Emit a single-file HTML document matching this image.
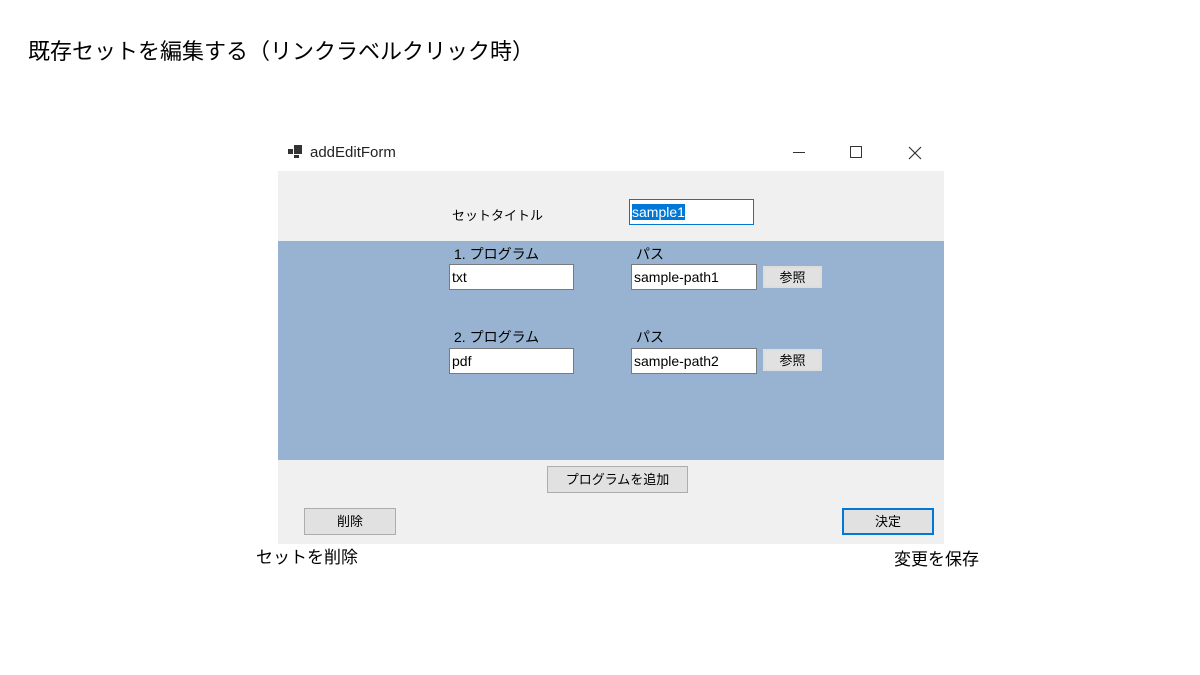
<!DOCTYPE html>
<html><head><meta charset="utf-8"><style>
body{margin:0;width:1200px;height:675px;background:#fff;position:relative;overflow:hidden;font-family:"Liberation Sans","Noto Sans CJK JP",sans-serif;}
.a{position:absolute;}
.t{font-size:13px;color:#000;white-space:nowrap;}
.in{position:absolute;background:#fff;border:1px solid #7a7a7a;box-sizing:border-box;height:26px;font-size:14px;line-height:24px;padding-left:2px;}
.btn{position:absolute;background:#e1e1e1;border:1px solid #adadad;box-sizing:border-box;font-size:13px;text-align:center;}
</style></head><body>
<div class="a" style="left:28px;top:34px;font-size:22px;white-space:nowrap">既存セットを編集する（リンクラベルクリック時）</div>
<svg class="a" style="left:288px;top:145px" width="16" height="14"><rect x="0" y="4" width="5" height="5" fill="#333"/><rect x="6" y="0" width="8" height="9" fill="#333"/><rect x="6" y="10" width="5" height="3" fill="#333"/></svg>
<div class="a" style="left:310px;top:144px;font-size:15px;color:#222">addEditForm</div>
<div class="a" style="left:793px;top:152px;width:12px;height:1px;background:#333"></div>
<div class="a" style="left:850px;top:146px;width:12px;height:12px;border:1px solid #333;box-sizing:border-box"></div>
<svg class="a" style="left:908px;top:146px" width="14" height="14"><path d="M1 1L13 13M13 1L1 13" stroke="#333" stroke-width="1.2"/></svg>
<div class="a" style="left:278px;top:171px;width:666px;height:373px;background:#f0f0f0"></div>
<div class="a" style="left:278px;top:241px;width:666px;height:219px;background:#98b3d1"></div>
<div class="a t" style="left:452px;top:205px">セットタイトル</div>
<div class="in" style="left:629px;top:199px;width:125px;border-color:#0078d7"><span style="background:#0078d7;color:#fff">sample1</span></div>
<div class="a t" style="left:454px;top:244px;font-size:14px">1. プログラム</div>
<div class="a t" style="left:636px;top:244px;font-size:14px">パス</div>
<div class="in" style="left:449px;top:264px;width:125px">txt</div>
<div class="in" style="left:631px;top:264px;width:126px">sample-path1</div>
<div class="btn" style="left:763px;top:266px;width:59px;height:22px;line-height:20px;border:2px solid #ddd">参照</div>
<div class="a t" style="left:454px;top:327px;font-size:14px">2. プログラム</div>
<div class="a t" style="left:636px;top:327px;font-size:14px">パス</div>
<div class="in" style="left:449px;top:348px;width:125px">pdf</div>
<div class="in" style="left:631px;top:348px;width:126px">sample-path2</div>
<div class="btn" style="left:763px;top:349px;width:59px;height:22px;line-height:20px;border:2px solid #ddd">参照</div>
<div class="btn" style="left:547px;top:466px;width:141px;height:27px;line-height:25px">プログラムを追加</div>
<div class="btn" style="left:304px;top:508px;width:92px;height:27px;line-height:25px">削除</div>
<div class="btn" style="left:842px;top:508px;width:92px;height:27px;line-height:23px;border:2px solid #0078d7">決定</div>
<div class="a" style="left:256px;top:543px;font-size:17px">セットを削除</div>
<div class="a" style="left:894px;top:545px;font-size:17px">変更を保存</div>
</body></html>
